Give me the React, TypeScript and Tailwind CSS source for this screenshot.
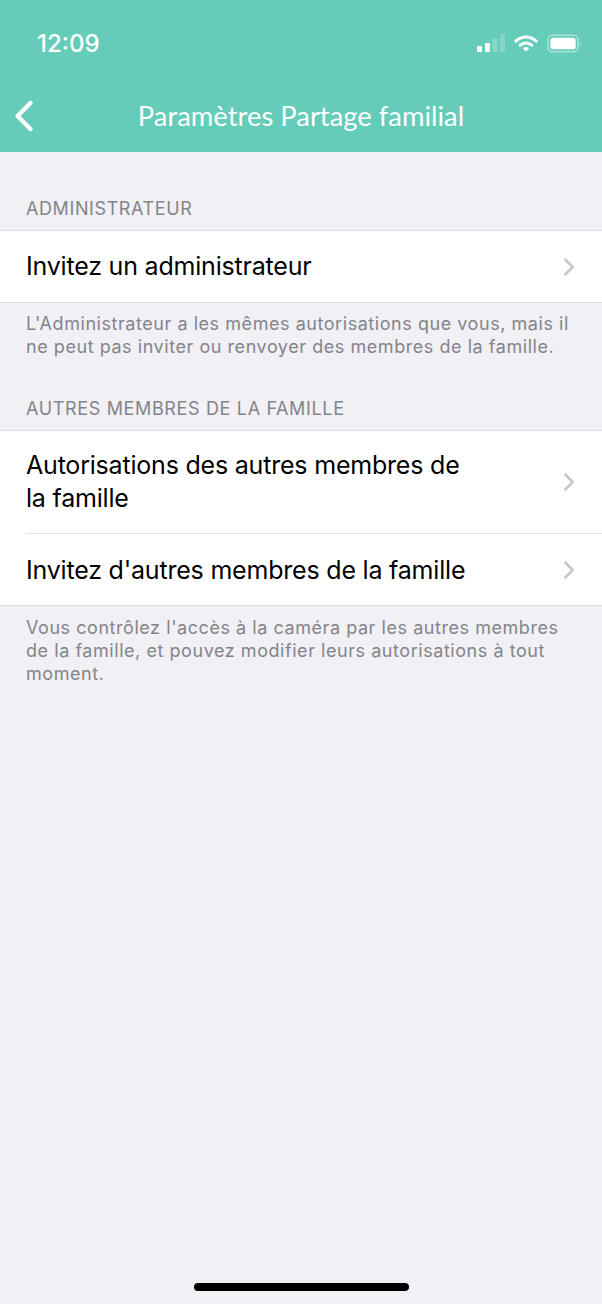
import { ChevronLeft, ChevronRight } from "lucide-react"

function StatusIcons() {
  return (
    <div className="flex items-center gap-[9px]">
      <svg width="28" height="19" viewBox="0 0 28 19">
        <rect x="0" y="12" width="5" height="6" rx="1" fill="#fff" />
        <rect x="8" y="9" width="5" height="9" rx="1" fill="#fff" />
        <rect x="15.5" y="4" width="5" height="14" rx="1" fill="#fff" fillOpacity="0.22" />
        <rect x="23" y="0" width="5" height="18" rx="1" fill="#fff" fillOpacity="0.22" />
      </svg>
      <svg width="24" height="19" viewBox="0 0 25 19" fill="none">
        <path d="M2 7 A15 15 0 0 1 23 7" stroke="#fff" strokeWidth="3.2" strokeLinecap="round" />
        <path d="M6.5 11.2 A9 9 0 0 1 18.5 11.2" stroke="#fff" strokeWidth="3.2" strokeLinecap="round" />
        <path d="M9.3 14.5 L12.5 18 L15.7 14.5 A5 5 0 0 0 9.3 14.5Z" fill="#fff" />
      </svg>
      <svg width="36" height="19" viewBox="0 0 37 19" fill="none">
        <rect x="1" y="1" width="31" height="17" rx="5" stroke="#fff" strokeOpacity="0.45" strokeWidth="1.6" />
        <rect x="3.5" y="3.5" width="26" height="12" rx="3" fill="#fff" />
        <path d="M34.5 7 C36 7.6 36 11.4 34.5 12Z" fill="#fff" fillOpacity="0.45" />
      </svg>
    </div>
  )
}

function Row({ children, className }: { children: React.ReactNode; className: string }) {
  return (
    <div className={`flex items-center pr-[18px] ${className}`}>
      <div className="flex-1 text-[25px] leading-[33px] tracking-[-0.2px] text-black">{children}</div>
      <ChevronRight size={30} strokeWidth={2} className="text-[#c7c7cc]" />
    </div>
  )
}

export default function App() {
  return (
    <div className="flex h-[1304px] w-[602px] flex-col overflow-hidden bg-[#f0f0f5] font-['Inter',sans-serif]">
      {/* Header */}
      <div className="h-[152px] shrink-0 bg-[#64ccb9] text-white">
        <div className="flex h-[87px] items-center justify-between pl-[37px] pr-[19px]">
          <span className="text-[24px] font-medium">12:09</span>
          <StatusIcons />
        </div>
        <div className="relative flex h-[57px] items-center justify-center font-['Lato',sans-serif] text-[27.4px]">
          <ChevronLeft size={52} strokeWidth={2} className="absolute left-[-2px] top-[3px]" />
          Paramètres Partage familial
        </div>
      </div>

      {/* Admin */}
      <div className="pl-[26px] pt-[46px] pb-[10px] text-[18px] leading-[22px] tracking-[0.6px] text-[#84848a]">ADMINISTRATEUR</div>
      <div className="border-y border-[#dcdce0] bg-white pl-[26px]">
        <Row className="h-[71px]">Invitez un administrateur</Row>
      </div>
      <div className="pl-[26px] pt-[9px] text-[18px] leading-[23px] tracking-[0.55px] text-[#84848a]">
        L'Administrateur a les mêmes autorisations que vous, mais il<br />
        ne peut pas inviter ou renvoyer des membres de la famille.
      </div>

      {/* Others */}
      <div className="pl-[26px] pt-[40px] pb-[10px] text-[18px] leading-[22px] tracking-[0.65px] text-[#84848a]">AUTRES MEMBRES DE LA FAMILLE</div>
      <div className="border-y border-[#dcdce0] bg-white pl-[26px]">
        <Row className="h-[103px] border-b border-[#e2e2e6]">Autorisations des autres membres de<br />la famille</Row>
        <Row className="h-[71px] pt-[1px]">Invitez d'autres membres de la famille</Row>
      </div>
      <div className="pl-[26px] pt-[10px] text-[18px] leading-[23px] tracking-[0.55px] text-[#84848a]">
        Vous contrôlez l'accès à la caméra par les autres membres<br />
        de la famille, et pouvez modifier leurs autorisations à tout<br />
        moment.
      </div>

      {/* Home indicator */}
      <div className="mt-auto mb-[13px] h-[8px] w-[215px] self-center rounded-full bg-black" />
    </div>
  )
}
